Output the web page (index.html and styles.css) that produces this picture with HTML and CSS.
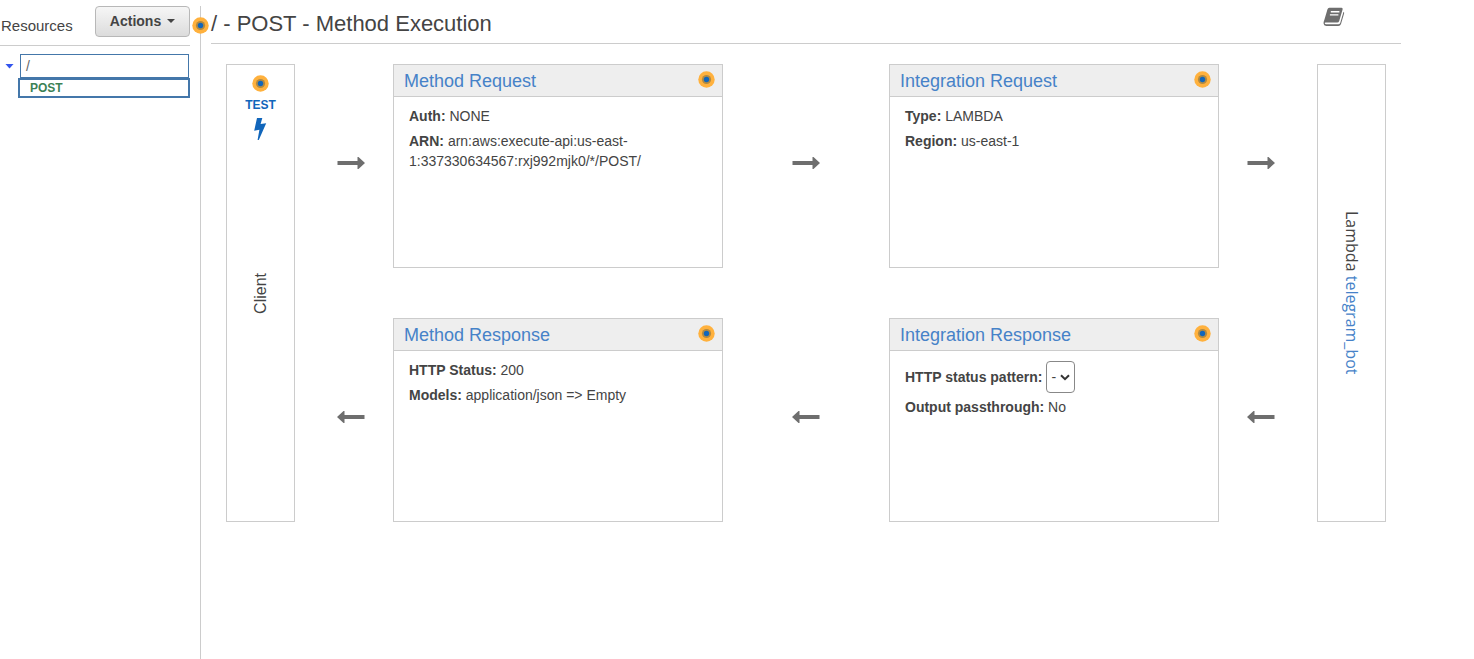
FILE: index.html
```html
<!DOCTYPE html>
<html lang="en">
<head>
<meta charset="utf-8">
<meta name="viewport" content="width=device-width, initial-scale=1">
<title>Method Execution</title>
<link rel="stylesheet" href="styles.css">
</head>
<body>
<svg class="defs" aria-hidden="true">
  <symbol id="dot" viewBox="0 0 17 17">
    <circle cx="8.5" cy="8.5" r="8.2" fill="#ffb13d"/>
    <circle cx="8.5" cy="8.5" r="4.6" fill="#b28a42"/>
    <circle cx="8.5" cy="8.5" r="2.7" fill="#1166bb"/>
  </symbol>
  <symbol id="arrow" viewBox="0 0 28 14">
    <path d="M0.5 5h20V1h1L28 7l-6.500 6h-1V9h-20z" fill="#6e6e6e"/>
  </symbol>
</svg>
<div class="app">
  <aside class="sidebar">
    <div class="sidebar-head">
      <span class="sidebar-title">Resources</span>
      <button class="actions" type="button">Actions <span class="caret"></span></button>
    </div>
    <nav class="tree">
      <div class="tree-row">
        <button class="toggle" type="button" aria-label="Collapse"></button>
        <a class="resource" href="#root">/</a>
      </div>
      <a class="method" href="#post">POST</a>
    </nav>
  </aside>
  <main class="main">
    <svg class="dot main-dot"><use href="#dot"/></svg>
    <header class="main-head">
      <h1>/ - POST - Method Execution</h1>
      <a class="docs" href="#docs" aria-label="Documentation">
        <svg viewBox="0 0 22 20">
          <path d="M6.3 0.8H18.6Q20 1 19.6 2.4L16.2 14Q15.7 15.5 14.2 15.5H2.5Q1.6 15.6 1.8 16.4Q2 17.2 3.2 17.2H15.3Q16.7 17.2 17.2 15.9L20.5 4.8Q21.5 5.4 21.1 6.5L18 17Q17.3 19 15.3 19H3.2Q0.7 18.8 0.5 16.2Q0.5 14.8 1.3 13L4.5 2.2Q4.9 0.9 6.3 0.8Z" fill="#6e6e6e"/>
          <path d="M7.8 4.7H16.4M6.9 7.9H15.4" stroke="#fff" stroke-width="1.4"/>
        </svg>
      </a>
    </header>
    <div class="flow">
      <section class="endpoint client">
        <a class="test" href="#test">
          <svg class="dot"><use href="#dot"/></svg>
          <span>TEST</span>
          <svg class="bolt" viewBox="0 0 14 22"><path d="M4 0H9.300L7.600 6L13.200 5.200L5.800 22H4.600L6.400 11.800L1.200 12.800Z" fill="#1166bb"/></svg>
        </a>
        <span class="vertical up">Client</span>
      </section>
      <div class="arrow near"><svg><use href="#arrow"/></svg></div>
      <section class="card">
        <header><h2><a href="#mreq">Method Request</a></h2><svg class="dot"><use href="#dot"/></svg></header>
        <div class="card-body">
          <p><b>Auth:</b> NONE</p>
          <p><b>ARN:</b> arn:aws:execute-api:us-east-<wbr>1:337330634567:rxj992mjk0/*/POST/</p>
        </div>
      </section>
      <div class="arrow"><svg><use href="#arrow"/></svg></div>
      <section class="card">
        <header><h2><a href="#ireq">Integration Request</a></h2><svg class="dot"><use href="#dot"/></svg></header>
        <div class="card-body">
          <p><b>Type:</b> LAMBDA</p>
          <p><b>Region:</b> us-east-1</p>
        </div>
      </section>
      <div class="arrow far"><svg><use href="#arrow"/></svg></div>
      <section class="endpoint lambda">
        <span class="vertical">Lambda <a href="#lambda">telegram_bot</a></span>
      </section>
      <div class="arrow back near"><svg><use href="#arrow"/></svg></div>
      <section class="card">
        <header><h2><a href="#mres">Method Response</a></h2><svg class="dot"><use href="#dot"/></svg></header>
        <div class="card-body">
          <p><b>HTTP Status:</b> 200</p>
          <p><b>Models:</b> application/json =&gt; Empty</p>
        </div>
      </section>
      <div class="arrow back"><svg><use href="#arrow"/></svg></div>
      <section class="card">
        <header><h2><a href="#ires">Integration Response</a></h2><svg class="dot"><use href="#dot"/></svg></header>
        <div class="card-body">
          <div class="field">
            <label for="pattern">HTTP status pattern:</label>
            <span class="select"><select id="pattern"><option>-</option></select><svg viewBox="0 0 10 7"><path d="M1 1.2L5 5.2L9 1.2" fill="none" stroke="#333" stroke-width="2"/></svg></span>
          </div>
          <p><b>Output passthrough:</b> No</p>
        </div>
      </section>
      <div class="arrow back far"><svg><use href="#arrow"/></svg></div>
    </div>
  </main>
</div>
</body>
</html>
```
FILE: styles.css
```css
* { box-sizing: border-box; }
body {
  margin: 0;
  font: 14px/20px "Liberation Sans", Arial, sans-serif;
  color: #444;
  background: #fff;
}
a { color: #4682c8; text-decoration: none; }
h1, h2, p { margin: 0; font-weight: normal; }
.defs { position: absolute; width: 0; height: 0; }
.dot { display: block; width: 17px; height: 17px; flex: none; }
.app { display: flex; min-height: 100vh; padding-top: 6px; }

.sidebar { width: 200px; flex: none; padding-right: 10px; }
.sidebar-head {
  display: flex;
  justify-content: space-between;
  height: 40px;
  padding-left: 1px;
  border-bottom: 1px solid #ccc;
}
.sidebar-title { font-size: 15px; line-height: 40px; }
.actions {
  display: flex;
  align-items: center;
  justify-content: center;
  gap: 6px;
  width: 95px;
  height: 31px;
  padding: 0 0 2px;
  border: 1px solid #b8b8b8;
  border-radius: 4px;
  background: linear-gradient(#f6f6f6, #dcdcdc);
  font: bold 14px "Liberation Sans", Arial, sans-serif;
  color: #444;
}
.caret { border: 4px solid transparent; border-top-color: #444; border-bottom: 0; }
.tree { padding: 8px 0 0 5px; }
.tree-row { display: flex; align-items: center; padding-right: 1px; }
.toggle {
  width: 9px;
  height: 5px;
  margin-right: 6px;
  padding: 0;
  border: 0;
  background: #3355ee;
  clip-path: polygon(0 0, 100% 0, 50% 100%);
}
.resource {
  flex: 1;
  height: 24px;
  padding-left: 5px;
  border: 1px solid #4477aa;
  line-height: 23px;
  color: #666;
}
.method {
  display: block;
  height: 20px;
  margin-left: 13px;
  padding-left: 10px;
  border: 2px solid #4477aa;
  font-size: 12px;
  font-weight: bold;
  line-height: 16px;
  color: #3c8155;
}

.main {
  position: relative;
  flex: 1;
  padding: 0 73px 0 10px;
  border-left: 1px solid #ccc;
}
.main-dot { position: absolute; left: -9px; top: 11px; }
.main-head {
  display: flex;
  justify-content: space-between;
  height: 38px;
  padding-right: 56px;
  border-bottom: 1px solid #ccc;
}
h1 { font-size: 22px; line-height: 36px; }
.docs svg { display: block; width: 22px; height: 20px; margin-top: 1px; }

.flow {
  display: grid;
  grid-template-columns: 69px 98fr 330fr 166fr 330fr 98fr 69px;
  grid-template-rows: 204px 204px;
  row-gap: 50px;
  padding: 20px 15px 0;
}
.endpoint {
  grid-row: 1 / 3;
  display: flex;
  flex-direction: column;
  align-items: center;
  justify-content: center;
  border: 1px solid #ccc;
  font-size: 16px;
  line-height: 20px;
}
.client { position: relative; }
.lambda { grid-column: 7; font-family: "Open Sans", sans-serif; }
.test {
  position: absolute;
  top: 10px;
  display: flex;
  flex-direction: column;
  align-items: center;
  font-size: 12px;
  font-weight: bold;
  line-height: 26px;
  color: #1166bb;
}
.bolt { width: 14px; height: 22px; }
.vertical { writing-mode: vertical-rl; }
.up { transform: rotate(180deg); }

.arrow { display: flex; align-items: center; justify-content: center; padding-bottom: 6px; }
.arrow svg { width: 28px; height: 14px; }
.near { padding-left: 14px; }
.far { padding-right: 14px; }
.back svg { transform: scaleX(-1); }

.card { min-width: 0; border: 1px solid #ccc; }
.card header {
  display: flex;
  justify-content: space-between;
  height: 32px;
  padding: 6px 7px 0 10px;
  border-bottom: 1px solid #ccc;
  background: #eee;
}
h2 { font-size: 18px; line-height: 20px; }
.card-body { padding: 9px 15px; }
.card-body p { margin-bottom: 5px; }
.field { display: flex; align-items: center; gap: 4px; margin: 1px 0 4px; font-weight: bold; }
.select { position: relative; }
.select select {
  display: block;
  width: 29px;
  height: 32px;
  padding: 0 0 0 4px;
  appearance: none;
  border: 1px solid #888;
  border-radius: 4px;
  background: #fff;
  font: 14px "Liberation Sans", Arial, sans-serif;
  color: #444;
}
.select svg { position: absolute; right: 5px; top: 13px; width: 10px; height: 7px; pointer-events: none; }
```
